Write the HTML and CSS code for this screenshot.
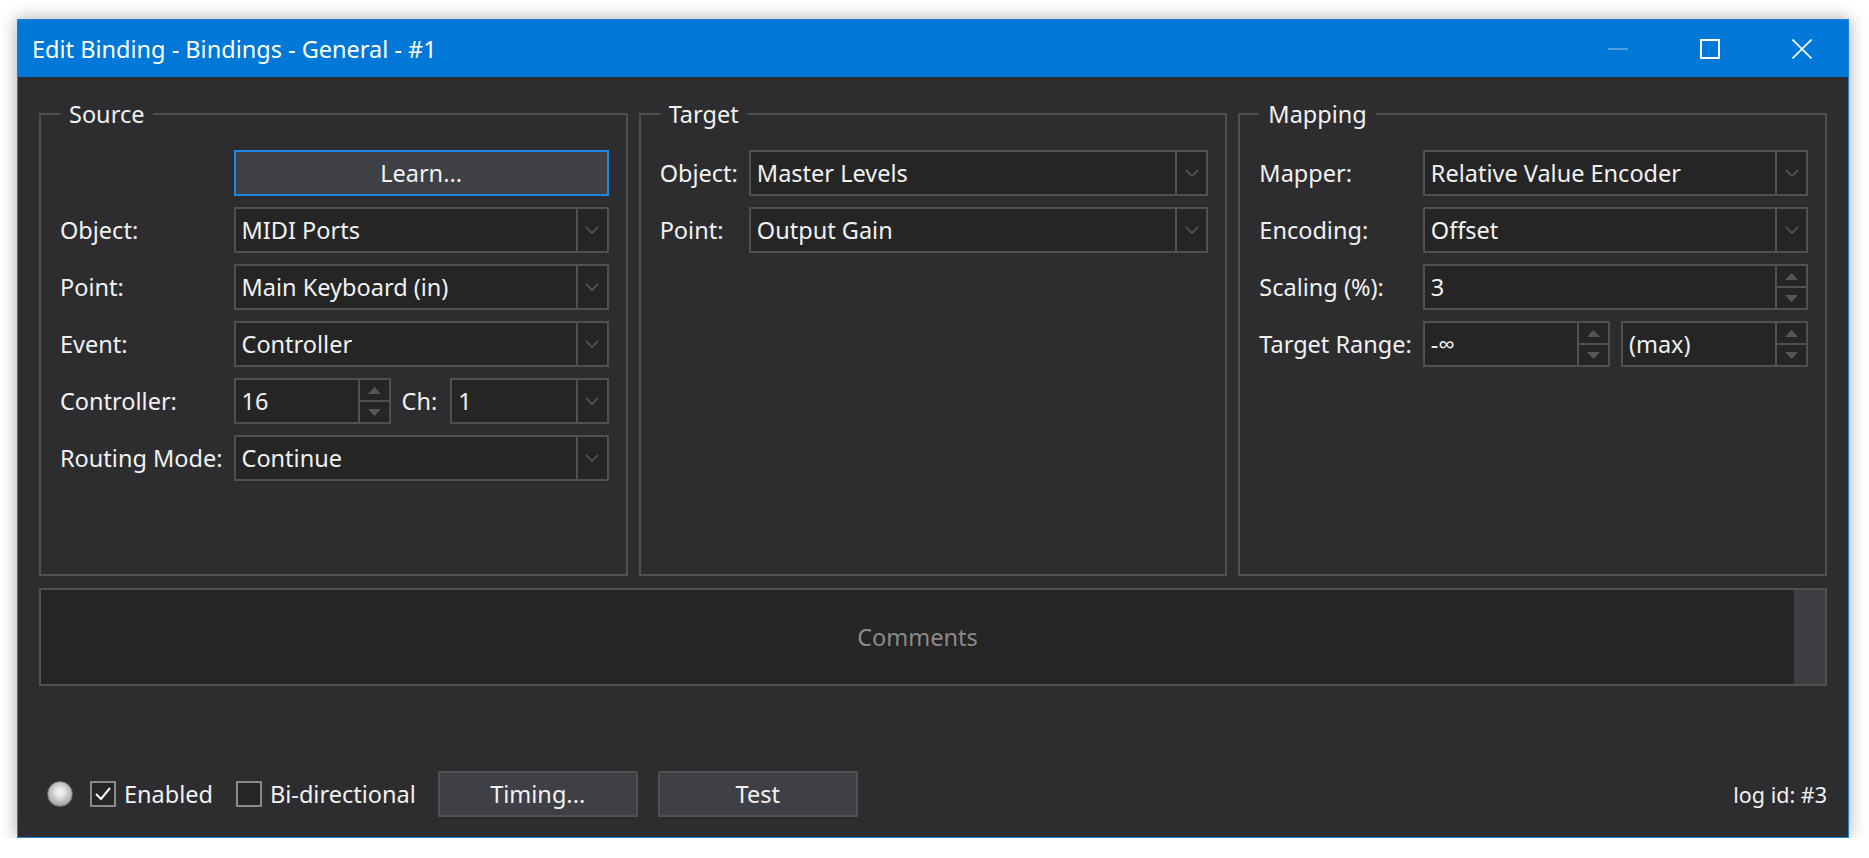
FILE: index.html
```html
<!DOCTYPE html>
<html>
<head>
<meta charset="utf-8">
<title>Edit Binding</title>
<link rel="stylesheet" href="styles.css">
</head>
<body>
<div class="window">
  <div class="titlebar">
    <div class="title">Edit Binding - Bindings - General - #1</div>
    <div class="cbtn"><svg width="20" height="20" viewBox="0 0 20 20"><line x1="0" y1="10" x2="20" y2="10" stroke="rgba(255,255,255,0.4)" stroke-width="1.5"/></svg></div>
    <div class="cbtn"><svg width="20" height="20" viewBox="0 0 20 20"><rect x="1" y="1" width="18" height="18" fill="none" stroke="#fff" stroke-width="2"/></svg></div>
    <div class="cbtn"><svg width="20" height="20" viewBox="0 0 20 20"><path d="M0.5 0.5 L19.5 19.5 M19.5 0.5 L0.5 19.5" stroke="#fff" stroke-width="1.6" fill="none"/></svg></div>
  </div>
  <div class="content">
    <div class="groups">
      <fieldset class="group">
        <legend>Source</legend>
        <div class="form">
          <span></span>
          <div class="btn btn-focus">Learn...</div>
          <span class="lbl">Object:</span>
          <div class="combo"><span class="val">MIDI Ports</span><span class="drop"><svg width="14" height="8" viewBox="0 0 14 8"><polyline points="1,1 7,7 13,1" fill="none" stroke="#5c5c5c" stroke-width="1.5"/></svg></span></div>
          <span class="lbl">Point:</span>
          <div class="combo"><span class="val">Main Keyboard (in)</span><span class="drop"><svg width="14" height="8" viewBox="0 0 14 8"><polyline points="1,1 7,7 13,1" fill="none" stroke="#5c5c5c" stroke-width="1.5"/></svg></span></div>
          <span class="lbl">Event:</span>
          <div class="combo"><span class="val">Controller</span><span class="drop"><svg width="14" height="8" viewBox="0 0 14 8"><polyline points="1,1 7,7 13,1" fill="none" stroke="#5c5c5c" stroke-width="1.5"/></svg></span></div>
          <span class="lbl">Controller:</span>
          <div class="pair">
            <div class="spin spin-small"><span class="val">16</span><span class="arrows"><span class="up"><svg width="13" height="7" viewBox="0 0 13 7"><polygon points="0,7 6.5,0 13,7" fill="#555"/></svg></span><span class="down"><svg width="13" height="7" viewBox="0 0 13 7"><polygon points="0,0 6.5,7 13,0" fill="#555"/></svg></span></span></div>
            <span class="lbl ch">Ch:</span>
            <div class="combo grow"><span class="val">1</span><span class="drop"><svg width="14" height="8" viewBox="0 0 14 8"><polyline points="1,1 7,7 13,1" fill="none" stroke="#5c5c5c" stroke-width="1.5"/></svg></span></div>
          </div>
          <span class="lbl">Routing Mode:</span>
          <div class="combo"><span class="val">Continue</span><span class="drop"><svg width="14" height="8" viewBox="0 0 14 8"><polyline points="1,1 7,7 13,1" fill="none" stroke="#5c5c5c" stroke-width="1.5"/></svg></span></div>
        </div>
      </fieldset>

      <fieldset class="group">
        <legend>Target</legend>
        <div class="form">
          <span class="lbl">Object:</span>
          <div class="combo"><span class="val">Master Levels</span><span class="drop"><svg width="14" height="8" viewBox="0 0 14 8"><polyline points="1,1 7,7 13,1" fill="none" stroke="#5c5c5c" stroke-width="1.5"/></svg></span></div>
          <span class="lbl">Point:</span>
          <div class="combo"><span class="val">Output Gain</span><span class="drop"><svg width="14" height="8" viewBox="0 0 14 8"><polyline points="1,1 7,7 13,1" fill="none" stroke="#5c5c5c" stroke-width="1.5"/></svg></span></div>
        </div>
      </fieldset>

      <fieldset class="group">
        <legend>Mapping</legend>
        <div class="form">
          <span class="lbl">Mapper:</span>
          <div class="combo"><span class="val">Relative Value Encoder</span><span class="drop"><svg width="14" height="8" viewBox="0 0 14 8"><polyline points="1,1 7,7 13,1" fill="none" stroke="#5c5c5c" stroke-width="1.5"/></svg></span></div>
          <span class="lbl">Encoding:</span>
          <div class="combo"><span class="val">Offset</span><span class="drop"><svg width="14" height="8" viewBox="0 0 14 8"><polyline points="1,1 7,7 13,1" fill="none" stroke="#5c5c5c" stroke-width="1.5"/></svg></span></div>
          <span class="lbl">Scaling (%):</span>
          <div class="spin"><span class="val">3</span><span class="arrows"><span class="up"><svg width="13" height="7" viewBox="0 0 13 7"><polygon points="0,7 6.5,0 13,7" fill="#555"/></svg></span><span class="down"><svg width="13" height="7" viewBox="0 0 13 7"><polygon points="0,0 6.5,7 13,0" fill="#555"/></svg></span></span></div>
          <span class="lbl">Target Range:</span>
          <div class="pair range">
            <div class="spin grow"><span class="val">-∞</span><span class="arrows"><span class="up"><svg width="13" height="7" viewBox="0 0 13 7"><polygon points="0,7 6.5,0 13,7" fill="#555"/></svg></span><span class="down"><svg width="13" height="7" viewBox="0 0 13 7"><polygon points="0,0 6.5,7 13,0" fill="#555"/></svg></span></span></div>
            <div class="spin grow"><span class="val">(max)</span><span class="arrows"><span class="up"><svg width="13" height="7" viewBox="0 0 13 7"><polygon points="0,7 6.5,0 13,7" fill="#555"/></svg></span><span class="down"><svg width="13" height="7" viewBox="0 0 13 7"><polygon points="0,0 6.5,7 13,0" fill="#555"/></svg></span></span></div>
          </div>
        </div>
      </fieldset>
    </div>

    <div class="comments">
      <div class="comments-text">Comments</div>
      <div class="scrollbar"></div>
    </div>

    <div class="bottom">
      <span class="led"></span>
      <span class="check checked"><svg width="18" height="16" viewBox="0 0 18 16"><polyline points="2,8 7,13 16,2" fill="none" stroke="#fff" stroke-width="2"/></svg></span>
      <span class="check-lbl">Enabled</span>
      <span class="check"></span>
      <span class="check-lbl">Bi-directional</span>
      <div class="btn btn-bottom timing">Timing...</div>
      <div class="btn btn-bottom">Test</div>
      <span class="logid">log id: #3</span>
    </div>
  </div>
</div>
</body>
</html>
```

FILE: styles.css
```css
* { box-sizing: border-box; }

body {
  margin: 0;
  padding: 19px 0 0 17px;
  background: #ffffff;
  font-family: "Noto Sans", "Open Sans", sans-serif;
  font-size: 23.5px;
  color: #f1f1f1;
}

.window {
  width: 1832px;
  height: 819px;
  border: 1px solid #1b84da;
  background: #2d2d30;
  box-shadow: 0 0 16px rgba(0, 0, 0, 0.35);
  display: flex;
  flex-direction: column;
}

.titlebar {
  height: 57px;
  background: #0078d7;
  display: flex;
  align-items: center;
  color: #ffffff;
  flex: none;
}

.title {
  flex: 1;
  padding-left: 14px;
  font-size: 23.5px;
  white-space: nowrap;
}

.cbtn {
  width: 92px;
  height: 57px;
  display: flex;
  align-items: center;
  justify-content: center;
}

.content {
  flex: 1;
  padding: 21px 21px 20px;
  display: flex;
  flex-direction: column;
}

.groups {
  display: grid;
  grid-template-columns: 1fr 1fr 1fr;
  column-gap: 11px;
  height: 478px;
  flex: none;
}

.group {
  margin: 0;
  min-width: 0;
  border: 2px solid #505050;
  padding: 20px 17px 0 19px;
}

.group legend {
  margin-left: 0;
  padding: 0 9px;
  line-height: 32px;
  font-size: 23.5px;
}

.form {
  display: grid;
  grid-template-columns: auto 1fr;
  grid-auto-rows: 46px;
  column-gap: 11px;
  row-gap: 11px;
  align-items: center;
}

.lbl {
  white-space: nowrap;
}

.combo, .spin {
  height: 46px;
  border: 2px solid #505050;
  background: #252526;
  display: flex;
  align-items: stretch;
}

.val {
  flex: 1;
  padding-left: 6px;
  display: flex;
  align-items: center;
  white-space: nowrap;
  overflow: hidden;
}

.drop {
  width: 31px;
  border-left: 2px solid #505050;
  display: flex;
  align-items: center;
  justify-content: center;
}

.arrows {
  width: 31px;
  border-left: 2px solid #505050;
  display: flex;
  flex-direction: column;
}

.arrows .up, .arrows .down {
  flex: 1;
  display: flex;
  align-items: center;
  justify-content: center;
}

.arrows .up {
  border-bottom: 2px solid #505050;
}

.pair {
  display: flex;
  align-items: center;
  height: 46px;
}

.spin-small {
  width: 157px;
}

.ch {
  margin: 0 13px 0 11px;
}

.grow {
  flex: 1;
  min-width: 0;
}

.range {
  gap: 11px;
}

.btn {
  height: 46px;
  background: #3f3f46;
  border: 2px solid #505050;
  display: flex;
  align-items: center;
  justify-content: center;
  color: #f1f1f1;
}

.btn-focus {
  border-color: #1e88e5;
}

.comments {
  margin-top: 12px;
  height: 98px;
  flex: none;
  border: 2px solid #505050;
  background: #252526;
  display: flex;
}

.comments-text {
  flex: 1;
  display: flex;
  align-items: center;
  justify-content: center;
  color: #8a8a8a;
}

.scrollbar {
  width: 31px;
  background: #3e3e42;
}

.bottom {
  margin-top: auto;
  height: 46px;
  display: flex;
  align-items: center;
  flex: none;
}

.led {
  width: 26px;
  height: 26px;
  margin-left: 8px;
  border-radius: 50%;
  border: 1px solid #6a6a6a;
  background: radial-gradient(circle at 50% 42%, #fbfbfb 0%, #dcdcdc 30%, #a8a8a8 70%, #7e7e7e 100%);
}

.check {
  width: 26px;
  height: 26px;
  margin-left: 17px;
  border: 2px solid #8a8a8a;
  background: #252526;
  display: flex;
  align-items: center;
  justify-content: center;
}

.check + .check-lbl {
  margin-left: 8px;
}

.check-lbl + .check {
  margin-left: 23px;
}

.btn-bottom {
  width: 200px;
  margin-left: 20px;
}

.timing {
  margin-left: 22px;
}

.logid {
  margin-left: auto;
  font-size: 21.5px;
}
```
